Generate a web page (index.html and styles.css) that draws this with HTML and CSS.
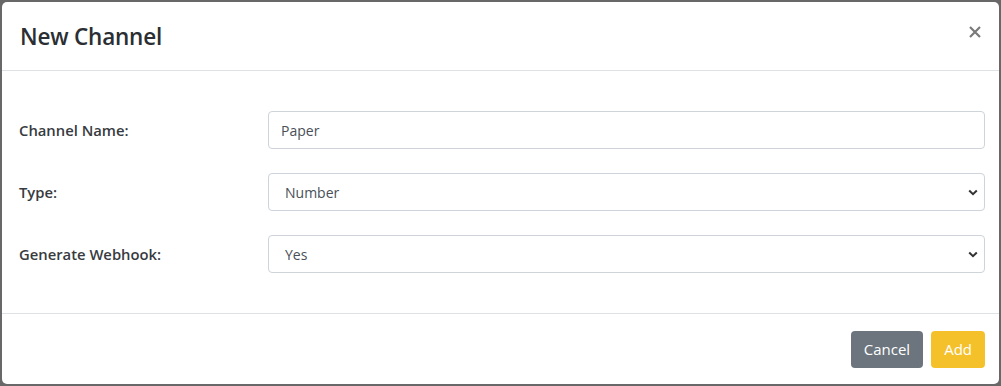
FILE: index.html
```html
<!DOCTYPE html>
<html lang="en">
<head>
  <meta charset="UTF-8">
  <meta name="viewport" content="width=device-width, initial-scale=1.0">
  <title>New Channel</title>
  <link rel="stylesheet" href="styles.css">
</head>
<body>
  <div class="modal">
      <div class="modal-header">
          <h1 class="modal-title">New Channel</h1>
          <button class="close" aria-label="Close">
              <svg width="12" height="12" viewBox="0 0 12 12">
                  <path d="M1 1 L11 11 M11 1 L1 11" stroke="#7a7a7a" stroke-width="2.2" fill="none"/>
              </svg>
          </button>
      </div>

      <div class="modal-body">
          <div class="form-row">
              <label for="channelName">Channel Name:</label>
              <input type="text" id="channelName" class="field" value="Paper">
          </div>

          <div class="form-row">
              <label for="channelType">Type:</label>
              <div class="select-wrap">
                  <select id="channelType" class="field">
                      <option>Number</option>
                      <option>Text</option>
                  </select>
                  <svg class="chevron" width="10" height="7" viewBox="0 0 10 7">
                      <path d="M1.2 1.5 L5 5.2 L8.8 1.5" stroke="#333" stroke-width="2" fill="none"/>
                  </svg>
              </div>
          </div>

          <div class="form-row">
              <label for="webhook">Generate Webhook:</label>
              <div class="select-wrap">
                  <select id="webhook" class="field">
                      <option>Yes</option>
                      <option>No</option>
                  </select>
                  <svg class="chevron" width="10" height="7" viewBox="0 0 10 7">
                      <path d="M1.2 1.5 L5 5.2 L8.8 1.5" stroke="#333" stroke-width="2" fill="none"/>
                  </svg>
              </div>
          </div>
      </div>

      <div class="modal-footer">
          <button class="btn cancel">Cancel</button>
          <button class="btn add">Add</button>
      </div>
  </div>
</body>
</html>
```

FILE: styles.css
```css
body {
    font-family: 'Open Sans', 'Noto Sans', sans-serif;
    background-color: #686868;
    margin: 0;
    padding: 2px;
    height: 386px;
    box-sizing: border-box;
}

.modal {
    background: #ffffff;
    border-radius: 5px;
    height: 382px;
    display: flex;
    flex-direction: column;
    color: #212529;
}

.modal-header {
    height: 68px;
    display: flex;
    align-items: center;
    justify-content: space-between;
    padding: 0 18px 0 18px;
    border-bottom: 1px solid #dee2e6;
}

.modal-title {
    margin: 0;
    font-size: 22.5px;
    font-weight: 600;
    color: #2b2f33;
    letter-spacing: -0.2px;
}

.close {
    background: none;
    border: none;
    padding: 0;
    margin-top: -8px;
    cursor: pointer;
    display: flex;
}

.modal-body {
    flex: 1;
    padding: 40px 14px 0 17px;
    display: flex;
    flex-direction: column;
    gap: 24px;
}

.form-row {
    display: flex;
    align-items: center;
}

label {
    width: 249px;
    font-size: 14.8px;
    font-weight: 600;
    color: #373b40;
}

.field {
    flex: 1;
    width: 100%;
    height: 38px;
    box-sizing: border-box;
    padding: 0 12px;
    border: 1px solid #ced4da;
    border-radius: 4px;
    font-family: inherit;
    font-size: 14px;
    color: #495057;
    background: #ffffff;
}

.select-wrap {
    flex: 1;
    position: relative;
    display: flex;
}

select.field {
    appearance: none;
    padding-left: 16px;
}

.chevron {
    position: absolute;
    right: 7px;
    top: 16px;
    pointer-events: none;
}

.modal-footer {
    height: 70px;
    border-top: 1px solid #dee2e6;
    display: flex;
    justify-content: flex-end;
    align-items: center;
    gap: 8px;
    padding: 0 14px 0 0;
}

.btn {
    height: 37px;
    padding: 0 13px;
    border: none;
    border-radius: 4px;
    font-family: inherit;
    font-size: 15px;
    color: #ffffff;
    cursor: pointer;
}

.btn.cancel {
    background: #6c757d;
}

.btn.add {
    background: #f5c12b;
}
```
